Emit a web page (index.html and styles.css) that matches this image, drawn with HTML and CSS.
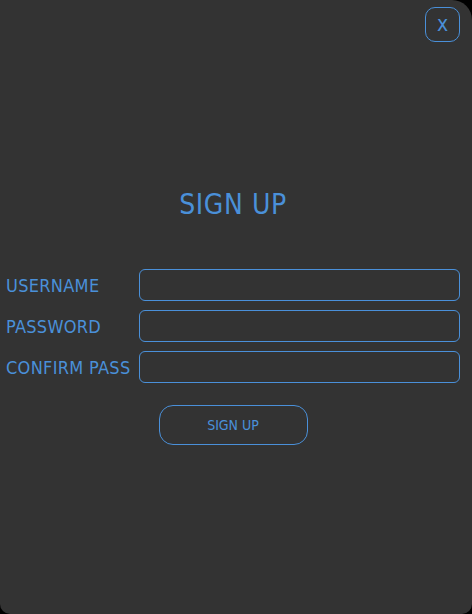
FILE: index.html
```html
<!DOCTYPE html>
<html lang="en">
<head>
<meta charset="utf-8">
<title>Sign Up</title>
<link rel="stylesheet" href="styles.css">
</head>
<body>
<div class="panel">
  <div class="header">
    <button class="close" type="button">x</button>
  </div>
  <h1 class="title">SIGN UP</h1>
  <form class="form">
    <label class="label" for="u">USERNAME</label>
    <input class="field" id="u" type="text">
    <label class="label" for="p">PASSWORD</label>
    <input class="field" id="p" type="password">
    <label class="label" for="c">CONFIRM PASS</label>
    <input class="field" id="c" type="password">
  </form>
  <div class="actions">
    <button class="submit" type="button">SIGN UP</button>
  </div>
</div>
</body>
</html>
```
FILE: styles.css
```css
html, body {
  margin: 0;
  padding: 0;
  background: #000;
}
.panel {
  box-sizing: border-box;
  width: 472px;
  height: 614px;
  background: #333333;
  border-radius: 0 20px 10px 10px;
  padding: 7px 12px 0 6px;
  font-family: "DejaVu Sans Condensed", "DejaVu Sans", sans-serif;
  color: #4a90d9;
}
.header {
  display: flex;
  justify-content: flex-end;
}
.close {
  box-sizing: border-box;
  width: 35px;
  height: 35px;
  border: 1px solid #4a90d9;
  border-radius: 10px;
  background: transparent;
  color: #4a90d9;
  font-family: inherit;
  font-size: 21px;
  line-height: 1;
  padding: 0;
  margin: 0;
}
.title {
  margin: 146px 0 0 0;
  text-align: center;
  font-weight: normal;
  font-size: 28px;
  letter-spacing: 0.6px;
  line-height: 34px;
}
.form {
  display: grid;
  grid-template-columns: 133px 1fr;
  row-gap: 9px;
  margin-top: 47px;
}
.label {
  display: flex;
  align-items: center;
  font-size: 18px;
  letter-spacing: 0.3px;
  height: 32px;
}
.field {
  box-sizing: border-box;
  height: 32px;
  margin: 0;
  border: 1px solid #4a90d9;
  border-radius: 6px;
  background: transparent;
  color: #4a90d9;
  outline: none;
}
.actions {
  display: flex;
  justify-content: center;
  margin-top: 22px;
}
.submit {
  box-sizing: border-box;
  width: 149px;
  height: 40px;
  border: 1px solid #4a90d9;
  border-radius: 14px;
  background: transparent;
  color: #4a90d9;
  font-family: inherit;
  font-size: 14px;
  margin: 0;
}
```
